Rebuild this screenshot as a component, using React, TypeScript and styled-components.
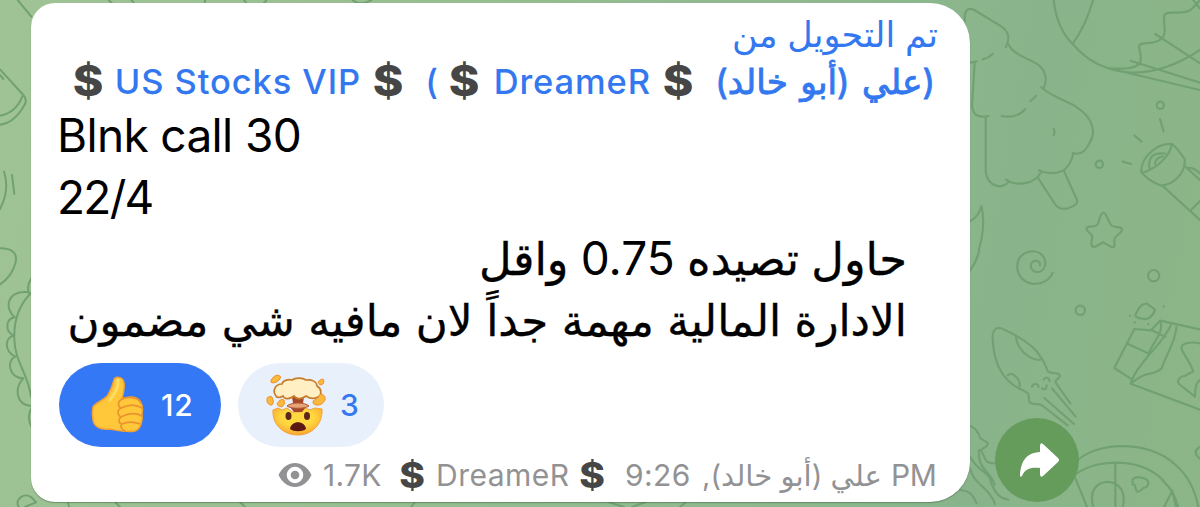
import React from 'react';
import styled, { createGlobalStyle } from 'styled-components';

const GlobalStyle = createGlobalStyle`
  html, body { margin: 0; padding: 0; }
  body { width: 1200px; height: 507px; overflow: hidden; }
`;

const Chat = styled.main`
  position: relative;
  box-sizing: border-box;
  display: flex;
  align-items: flex-end;
  width: 1200px;
  height: 507px;
  padding: 0 0 5px 31px;
  gap: 25px;
  overflow: hidden;
  font-family: Inter, 'DejaVu Sans', sans-serif;
  background: linear-gradient(100deg, #9fc394 0%, #96bd90 40%, #89b48b 82%, #8cb687 100%);
`;

const Wallpaper = styled.svg`
  position: absolute;
  inset: 0;
  fill: none;
  stroke: #71a173;
  stroke-linecap: round;
  stroke-linejoin: round;
`;

const Bubble = styled.article`
  position: relative;
  box-sizing: border-box;
  width: 939px;
  height: 499px;
  padding-top: 8px;
  background: #fff;
  border-radius: 24px 40px 40px 24px;
  box-shadow: 0 1px 1px rgba(70, 100, 65, 0.55);
`;

const ForwardHeader = styled.header`
  height: 94px;
  padding-right: 32px;
  color: #3478f0;
`;

const Row = styled.div<{ $height: number; $rtl?: boolean }>`
  display: flex;
  align-items: baseline;
  direction: ${(p) => (p.$rtl ? 'rtl' : 'ltr')};
  height: ${(p) => p.$height}px;
  line-height: ${(p) => p.$height}px;
`;

const Part = styled.span<{
  $width?: number;
  $size: number;
  $weight?: number;
  $track?: number;
  $words?: number;
  $gap?: number;
}>`
  flex: 0 0 ${(p) => (p.$width ? `${p.$width}px` : 'auto')};
  margin-inline-start: ${(p) => p.$gap ?? 0}px;
  white-space: pre;
  font-size: ${(p) => p.$size}px;
  font-weight: ${(p) => p.$weight ?? 400};
  letter-spacing: ${(p) => p.$track ?? 0}px;
  word-spacing: ${(p) => p.$words ?? 0}px;
`;

const ArabicName = styled(Part)`
  -webkit-text-stroke: 0.9px currentColor;
`;

const ArabicLine = styled(Part)`
  -webkit-text-stroke: 0.35px currentColor;
`;

const Price = styled.span`
  font-size: 46px;
  letter-spacing: -1.4px;
  -webkit-text-stroke: 0;
`;

const Dollar = styled.span<{ $width: number; $size: number }>`
  position: relative;
  top: 2px;
  flex: 0 0 ${(p) => p.$width}px;
  display: flex;
  justify-content: center;
  line-height: 0;
  color: #464646;
  font-size: ${(p) => p.$size}px;
  font-weight: 800;
  transform: scaleX(1.08);
`;

const Message = styled.div`
  padding: 0 63px 0 26px;
  height: 248px;
  color: #000;
`;

const Reactions = styled.div`
  display: flex;
  gap: 17px;
  padding: 10px 0 0 28px;
`;

const Reaction = styled.button<{ $width: number; $active?: boolean }>`
  display: flex;
  align-items: center;
  box-sizing: border-box;
  width: ${(p) => p.$width}px;
  height: 84px;
  padding: 0 0 0 28px;
  border: 0;
  border-radius: 42px;
  gap: 14px;
  font: 500 30px Inter, sans-serif;
  letter-spacing: 0.8px;
  color: ${(p) => (p.$active ? '#fff' : '#3478f0')};
  background: ${(p) => (p.$active ? '#3478f6' : '#e8f0fc')};
`;

const Footer = styled.footer`
  padding: 8px 0 0 247px;
  color: #929294;
`;

const EyeIcon = styled.svg`
  flex: 0 0 34px;
  margin-right: 11px;
  align-self: center;
`;

const ShareButton = styled.button`
  position: relative;
  width: 84px;
  height: 84px;
  padding: 0;
  border: 0;
  border-radius: 50%;
  background: #659c5b;
`;

const ThumbUp = () => (
  <svg width="60" height="60" viewBox="0 0 60 60">
    <path
      d="M6 32C9 27 18 25 21 20C25 13 26 9 27 5C28 1 36 1 37 8C38 13 36 19 35 24C39 22 47 21 51 24C56 28 56 34 55 39C56 45 54 54 48 56C40 58 29 55 22 54C14 55 7 52 6 45C5 40 5 36 6 32Z"
      fill="#ffc83b"
      stroke="#f2a034"
      strokeWidth="1.5"
    />
    <path
      d="M35 24C31 26 30 31 34 33M34 33C30 35 30 40 34 42M34 42C31 44 31 48 35 49M35 49C33 51 34 54 38 56M35 24C41 21 51 22 54 28M34 33C42 29 50 30 55 33M34 42C42 38 50 38 55 41M35 49C42 46 48 47 53 49"
      fill="none"
      stroke="#ec932f"
      strokeWidth="1.7"
      strokeLinecap="round"
    />
    <path d="M31 5C32 13 27 20 23 25" fill="none" stroke="#ffdc62" strokeWidth="3" strokeLinecap="round" />
  </svg>
);

const ExplodingHead = () => (
  <svg width="60" height="64" viewBox="0 0 60 64">
    <defs>
      <radialGradient id="face" cx="50%" cy="35%" r="65%">
        <stop offset="0.5" stopColor="#ffd83f" />
        <stop offset="1" stopColor="#f9a42f" />
      </radialGradient>
    </defs>
    <path d="M7 37L12 35L16 37L21 35L26 39L34 39L39 35L44 37L49 35L56 36C57 52 45 62 32 62C17 62 6 51 7 37Z" fill="url(#face)" stroke="#f5a13a" />
    <path d="M26 24H38L37 30L40 34L36 39H28L24 34L27 30Z" fill="#a5472b" />
    <path d="M21 33C25 29 39 29 43 33C39 36 25 36 21 33Z" fill="#e9a379" stroke="#b35d32" />
    <path
      d="M10 23C6 18 9 11 16 11C17 7 23 6 26 7C30 4 37 5 40 7C46 6 51 9 51 13C56 16 56 22 52 24C47 27 43 25 40 23C35 27 30 26 28 23C23 27 18 26 17 23C14 25 11 25 10 23Z"
      fill="#ffefc3"
      stroke="#c87d2b"
      strokeWidth="1.7"
    />
    <g fill="#f9b93d" stroke="#ef9331" strokeWidth="1" strokeLinejoin="round">
      <path d="M5 7Q8 2 12 2Q16 3 14 6Q11 10 7 10Q4 10 5 7Z" />
      <path d="M52 9Q54 6 57 6Q59 8 57 11L54 12Z" />
      <path d="M1 25Q4 22 6 24Q9 29 6 32Q3 33 1 29Z" />
      <path d="M13 28Q16 25 18 27Q20 31 16 34Q12 34 11 31Z" />
      <path d="M47 28Q51 27 55 21Q60 22 59 27Q56 33 50 32Q46 31 47 28Z" />
    </g>
    <ellipse cx="22.5" cy="43" rx="3" ry="4" fill="#5d2817" />
    <ellipse cx="41" cy="43" rx="3" ry="4" fill="#5d2817" />
    <path d="M24 56C25 47 39 47 40 56C36 59 28 59 24 56Z" fill="#5b1712" />
  </svg>
);

const Doodles = () => (
  <Wallpaper width="1200" height="507" viewBox="0 0 1200 507">
    <g transform="translate(960 0) scale(0.3333)" strokeWidth="6.5">
      <path d="M14 64C12 35 20 20 43 30L125 80C148 96 150 115 138 141M145 132C160 165 205 175 228 190C258 207 264 240 250 267M244 262C280 295 325 302 355 325C399 355 409 398 389 428C378 453 362 467 338 459M340 462C332 490 323 505 308 512C285 523 255 521 237 511M242 518C225 553 168 560 138 539M144 547C131 566 84 565 77 515V352M30 188L50 184M44 188L36 318C39 343 50 355 86 348M68 178Q84 175 98 162M125 348Q170 357 196 327M211 304L228 288M281 386Q286 396 281 406" />
      <path d="M235 535L286 614Q300 632 326 624Q358 613 350 598L312 513M64 618C58 645 45 656 30 664M65 620C74 665 68 712 56 750" />
      <path d="M281 0C288 60 310 105 338 132C374 174 410 194 442 204C518 230 610 222 720 150M338 132Q380 72 399 0M442 204L720 270M512 182L720 248M586 102L720 190M442 204C500 209 520 205 539 192C548 172 539 158 537 139C541 120 579 139 603 117C623 102 609 78 613 46C618 27 663 49 693 29C704 19 713 8 720 0M700 0L720 26" />
      <circle cx="601" cy="316" r="11" />
      <circle cx="418" cy="493" r="11" />
      <path d="M600 357L611 394M523 406L545 425M488 485L514 492M431 638C439 638 445 667 455 677C468 684 491 679 485 692C479 704 464 708 463 718C462 734 469 745 452 740L430 727L404 741C387 742 397 718 397 708C391 697 376 692 380 684C386 675 407 684 414 671C420 656 421 639 431 638Z" />
      <path d="M543 514C546 467 594 428 636 432C650 442 663 462 674 477C678 520 637 558 601 556C580 550 552 529 543 514ZM548 518C592 504 629 469 636 433M568 503Q563 455 615 461M585 492Q586 474 608 469M607 557L720 660M674 498L720 540M681 504Q700 501 720 520M691 632L720 603" />
    </g>
    <g transform="translate(960 250) scale(0.3333)" strokeWidth="6.5">
      <path d="M30 62Q50 35 58 0M278 68C260 115 180 115 172 55C168 5 225-8 246 15C268 40 250 68 230 66C208 64 206 32 228 32Q242 34 240 46" />
      <circle cx="581" cy="77" r="17" />
      <circle cx="361" cy="181" r="14" />
      <path d="M526 194C535 179 541 160 561 161L585 179C580 197 565 213 541 205Q527 203 526 194Z" />
      <path d="M510 197V198M524 217V218M565 222V223M611 169V170" />
      <path d="M98 267C96 239 111 227 130 238C180 261 226 290 242 321C254 336 256 347 264 365C281 373 302 366 299 379C294 392 281 389 289 399M98 267C101 330 123 378 159 404C176 418 193 419 205 432L208 456C216 466 234 460 245 465L323 526M168 262C171 295 205 329 240 330M143 376C158 363 181 387 179 409M289 401L331 460M276 415L347 500M253 444L342 522M216 411C218 398 234 400 236 411M251 389C256 379 267 382 269 393M246 415Q260 424 260 406" />
      <path d="M523 237L463 354L512 386M523 237L573 241L600 212L720 238M503 281L564 310M574 240L616 260M635 220C619 260 585 294 562 321C543 346 520 368 512 401L720 479M650 222C650 267 622 307 605 355C583 380 560 358 512 401M602 218C612 247 575 282 567 310M720 280C695 275 661 277 665 297C668 312 684 321 700 364L674 378C655 380 648 398 661 405L705 440Q705 397 720 390" />
      <path d="M30 527C50 535 57 551 61 565L83 578C83 596 67 592 63 601C77 625 71 640 105 640M57 600C52 660 91 660 104 704M30 620C56 668 91 665 93 697C104 726 116 744 145 749M30 655C45 710 84 705 105 762M0 720C30 722 38 735 50 760" />
      <path d="M344 640C398 575 565 566 647 645Q700 691 715 771M344 680L381 771M350 671C420 620 565 626 617 701C638 719 647 745 655 771M466 640V771M400 771C370 670 514 671 488 771M518 689C528 676 541 682 549 684C566 689 570 701 559 711C543 712 546 727 532 725C520 714 533 704 518 703ZM637 723L612 771M637 723L648 771M720 591Q694 604 720 627" />
    </g>
    <g transform="scale(0.3333)" strokeWidth="6">
      <path d="M53 0L94 50M0 208L70 285Q85 302 70 321Q40 370 0 374M0 347Q48 338 67 289M0 225L10 237M12 515Q30 570 0 627M36 525L43 581M326 0L335 9M394 0L402 9M615 0V9M732 0L739 9M800 0L792 9M1058 0Q1080 20 1115 0" />
    </g>
    <g transform="translate(0 230) scale(0.3333)" strokeWidth="6">
      <path d="M0 55Q55 55 47 96Q37 139 0 163M94 145Q79 167 87 190M87 187C20 180 12 234 44 262C16 267 14 306 42 317C15 321 10 362 46 380C20 390 24 443 70 445C42 475 48 525 93 528M94 188C56 225 41 272 43 327C44 395 84 430 93 500M94 535Q79 561 94 589M56 831C42 806 75 787 94 802L108 817L75 831" />
    </g>
    <path strokeWidth="1.9" d="M68 502L69 507M115 502L120 507M240 502L245 507M415 502L411 507M608 502L624 507M646 502L632 507M686 502L680 507" />
  </Wallpaper>
);

export default function App() {
  return (
    <>
      <GlobalStyle />
      <Chat>
        <Doodles />
        <Bubble>
          <ForwardHeader>
            <Row $height={47} $rtl>
              <Part $size={35}>تم التحويل من</Part>
            </Row>
            <Row $height={47} $rtl>
              <ArabicName $size={34.3} $words={2.8} $gap={3} $width={242}>(علي (أبو خالد)</ArabicName>
              <Dollar $width={30} $size={43}>$</Dollar>
              <Part $size={34.5} $weight={500} $track={0.9} $gap={12} $width={172}>DreameR</Part>
              <Dollar $width={30} $size={43}>$</Dollar>
              <Part $size={34.5} $weight={500} $gap={11} $width={35}>)</Part>
              <Dollar $width={30} $size={43}>$</Dollar>
              <Part $size={34.5} $weight={500} $track={0.9} $gap={12} $width={258}>US Stocks VIP</Part>
              <Dollar $width={30} $size={43}>$</Dollar>
            </Row>
          </ForwardHeader>
          <Message>
            <Row $height={61.7}><Part $size={46} $track={-0.65}>Blnk call 30</Part></Row>
            <Row $height={61.7}><Part $size={46} $track={-1.7}>22/4</Part></Row>
            <Row $height={61.7} $rtl>
              <ArabicLine $size={44.9} $words={-0.4}>حاول تصيده <Price>0.75</Price> واقل</ArabicLine>
            </Row>
            <Row $height={61.7} $rtl>
              <ArabicLine $size={43.6} $words={1.3}>الادارة المالية مهمة جداً لان مافيه شي مضمون</ArabicLine>
            </Row>
          </Message>
          <Reactions>
            <Reaction $width={162} $active><ThumbUp />12</Reaction>
            <Reaction $width={146}><ExplodingHead />3</Reaction>
          </Reactions>
          <Footer>
            <Row $height={40}>
              <EyeIcon width="34" height="26" viewBox="0 0 34 26">
                <path d="M0.5 13C8-3 26-3 33.5 13C26 29 8 29 0.5 13Z" fill="#929294" />
                <circle cx="17" cy="13" r="6.3" fill="none" stroke="#fff" strokeWidth="4" />
              </EyeIcon>
              <Part $size={30} $track={0.3} $width={77}>1.7K</Part>
              <Dollar $width={24} $size={36}>$</Dollar>
              <Part $size={30} $track={0.5} $gap={12} $width={144}>DreameR</Part>
              <Dollar $width={24} $size={36}>$</Dollar>
              <Part $size={30} $track={0.4} $gap={21} $width={77}>9:26</Part>
              <Part $size={29.2} $width={180} dir="rtl">علي (أبو خالد),</Part>
              <Part $size={30} $track={-0.5} $gap={9}>PM</Part>
            </Row>
          </Footer>
        </Bubble>
        <ShareButton aria-label="Share">
          <svg width="84" height="84" viewBox="0 0 84 84">
            <path d="M45 28Q45 24 48 26L63 40Q65 42 63 44L48 58Q45 60 45 56V50C35 49 30 51 27 58Q25 60 25 57C26 43 31 35 45 34Z" fill="#fff" />
          </svg>
        </ShareButton>
      </Chat>
    </>
  );
}
